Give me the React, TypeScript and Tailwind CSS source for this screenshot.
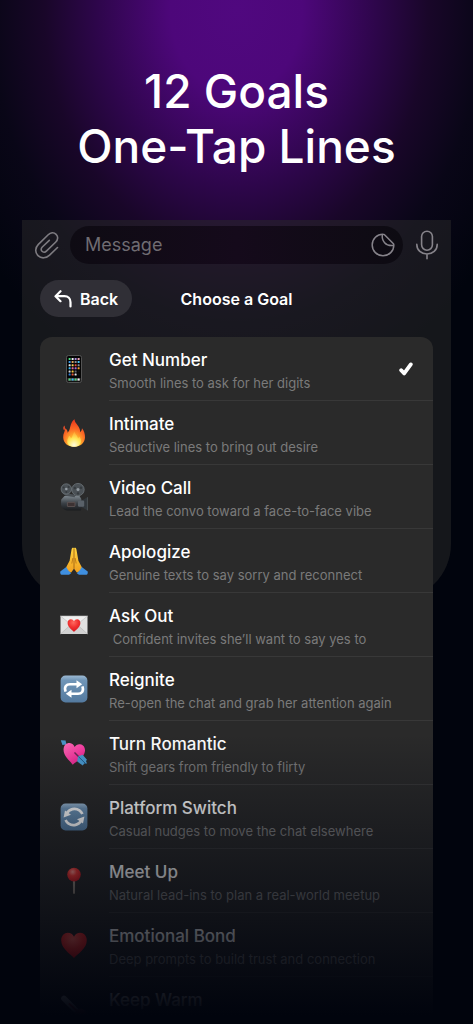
import type { ReactNode } from 'react'
import { useState } from 'react'

type Goal = {
  title: string
  text?: string
  icon: ReactNode
}

const Svg = ({ children }: { children: ReactNode }) => (
  <svg viewBox="0 0 28 28" className="w-7 h-7 shrink-0" aria-hidden="true">
    {children}
  </svg>
)

const appColors = [
  ['#4ade80', '#f3f4f6', '#a88be0', '#f0a6b8'],
  ['#3b9ded', '#d8a25a', '#8a8f98', '#45c4f5'],
  ['#e8ecf2', '#efd25c', '#e0503c', '#8c9098'],
  ['#38bdf8', '#e66a9a', '#9b6bd8', '#f59e2b'],
  ['#d1d5db', '#f5c542', '#5f6670', '#111111'],
  ['#2f7fe0', '#e25a3a', '#e8ecf2', '#111111'],
]

const Phone = () => (
  <Svg>
    <rect x="6.5" y="0.5" width="15" height="27" rx="2" fill="#050505" stroke="#5a5a5a" strokeWidth="0.9" />
    {appColors.map((row, y) =>
      row.map((color, x) => (
        <rect key={`${x}-${y}`} x={8.6 + x * 3} y={3 + y * 3.1} width="2" height="2" rx="0.5" fill={color} />
      )),
    )}
    <rect x="7.6" y="23" width="12.8" height="3.2" fill="#444" />
    <rect x="8.6" y="23.6" width="2" height="2" rx="0.5" fill="#4ade80" />
    <rect x="11.6" y="23.6" width="2" height="2" rx="0.5" fill="#38bdf8" />
    <rect x="14.6" y="23.6" width="2" height="2" rx="0.5" fill="#4ade80" />
    <rect x="17.6" y="23.6" width="2" height="2" rx="0.5" fill="#f3f4f6" />
  </Svg>
)

const Fire = () => (
  <Svg>
    <defs>
      <radialGradient id="flame" cx="0.5" cy="0.88" r="0.85">
        <stop offset="0" stopColor="#fff27a" />
        <stop offset="0.3" stopColor="#ffb52e" />
        <stop offset="0.62" stopColor="#fb6a25" />
        <stop offset="1" stopColor="#e8371c" />
      </radialGradient>
      <radialGradient id="flame-core" cx="0.5" cy="0.9" r="0.9">
        <stop offset="0" stopColor="#fffde0" />
        <stop offset="0.5" stopColor="#ffe85a" />
        <stop offset="1" stopColor="#ff9a2e" />
      </radialGradient>
    </defs>
    <path
      d="M14 27.8C7.5 27.8 3.5 23.8 3.2 18.5C3 14.5 5 12.5 5.3 9.2C7 10.5 7.7 12 7.6 13.8C10.5 10.5 9.8 7.5 11.4 4.2C12.2 2.5 13 1 14.6 0.2C14.3 4.5 20.5 7 20.2 13.2C21.4 12.2 21.9 10.8 22 9.3C24 12 25.2 15 25 18.5C24.7 24 20.5 27.8 14 27.8Z"
      fill="url(#flame)"
    />
    <path d="M4.3 11.5C2.8 10 3 7.8 4.6 6.6C4.5 8 5.7 9.7 4.3 11.5Z" fill="#f0502a" />
    <path
      d="M14 27.8C9.5 27.8 7 25.2 7.2 22C7.4 19.8 8.6 18.6 9 16.8C10.3 17.4 10.8 18.5 10.9 19.6C13 17.5 12.6 14.5 14.8 12.5C14.8 15.5 17.8 16.6 18 19.6C18.7 19 19 18.2 19.2 17.5C20.5 19 21.1 20.5 20.9 22.4C20.6 25.6 18.2 27.8 14 27.8Z"
      fill="url(#flame-core)"
    />
  </Svg>
)

const Camera = () => (
  <Svg>
    <defs>
      <linearGradient id="camera" x1="0" y1="0" x2="0" y2="1">
        <stop offset="0" stopColor="#7c858c" />
        <stop offset="0.5" stopColor="#3a4046" />
        <stop offset="1" stopColor="#191b1e" />
      </linearGradient>
    </defs>
    <path d="M20.5 18L27.5 14.2V27.4L20.5 23.5Z" fill="#30363b" />
    <path d="M27.4 14.2V27.4" stroke="#565d63" strokeWidth="0.7" />
    <path d="M1.2 16.5L4.5 13H19.5L21.3 16V26C21.3 27 20.8 27.6 19.8 27.6H7.5C3.8 27.4 1 24.6 1 21Z" fill="url(#camera)" />
    <rect x="18" y="17.5" width="6.2" height="6.3" rx="1.2" fill="#596169" />
    <rect x="7.4" y="19.3" width="7.6" height="4.2" rx="0.5" fill="#3c3233" stroke="#706362" strokeWidth="0.6" />
    <path d="M2 8L6 11.5L15 13" stroke="#4a5055" strokeWidth="2.4" fill="none" />
    <circle cx="6.3" cy="6" r="5.2" fill="#4b5156" stroke="#737b81" strokeWidth="0.7" />
    <circle cx="18" cy="6.6" r="6.2" fill="#4b5156" stroke="#737b81" strokeWidth="0.7" />
    <circle cx="6.3" cy="6" r="1.3" fill="#949ca2" />
    <circle cx="18" cy="6.6" r="1.5" fill="#949ca2" />
    <g fill="#363b3f">
      <circle cx="3.6" cy="4.6" r="1" />
      <circle cx="8.7" cy="4.1" r="1" />
      <circle cx="6.3" cy="9.1" r="1" />
      <circle cx="14.8" cy="5" r="1.2" />
      <circle cx="21" cy="4.8" r="1.2" />
      <circle cx="18" cy="10.4" r="1.2" />
    </g>
  </Svg>
)

const Pray = () => (
  <Svg>
    <defs>
      <linearGradient id="hand" x1="0" y1="0" x2="0" y2="1">
        <stop offset="0" stopColor="#ffd43f" />
        <stop offset="1" stopColor="#f0a020" />
      </linearGradient>
    </defs>
    <path d="M0.3 24.5L6.6 19.8L11.2 26.2L9 27.8H1.6C0.4 27.6 0 25.8 0.3 24.5Z" fill="#3f8fe0" />
    <path d="M27.7 24.5L21.4 19.8L16.8 26.2L19 27.8H26.4C27.6 27.6 28 25.8 27.7 24.5Z" fill="#3f8fe0" />
    <path d="M13.9 1C12.6 0.2 11.8 1 11.6 2.3L9.6 13.8L6.3 20C7.3 22.6 9.2 24.8 11.2 25.6L13.9 21.8Z" fill="url(#hand)" />
    <path d="M14.1 1C15.4 0.2 16.2 1 16.4 2.3L18.4 13.8L21.7 20C20.7 22.6 18.8 24.8 16.8 25.6L14.1 21.8Z" fill="url(#hand)" />
    <path d="M14 1.5V21.8M11.8 16.5L12.9 11M16.2 16.5L15.1 11" stroke="#b36d12" strokeWidth="0.8" fill="none" />
  </Svg>
)

const HeartShape = ({ fill }: { fill: string }) => (
  <path
    d="M14 27C10 22.5 1.2 17.5 1.2 9.2C1.2 4.8 4.2 1.8 7.8 1.8C10.6 1.8 12.9 3.3 14 5.8C15.1 3.3 17.4 1.8 20.2 1.8C23.8 1.8 26.8 4.8 26.8 9.2C26.8 17.5 18 22.5 14 27Z"
    fill={fill}
  />
)

const RedGradient = ({ id }: { id: string }) => (
  <defs>
    <radialGradient id={id} cx="0.45" cy="0.25" r="0.8">
      <stop offset="0" stopColor="#ff6a60" />
      <stop offset="0.5" stopColor="#f0302f" />
      <stop offset="1" stopColor="#cf1420" />
    </radialGradient>
  </defs>
)

const Letter = () => (
  <Svg>
    <RedGradient id="letter-heart" />
    <rect x="0.5" y="5" width="27" height="18" fill="#e2e2e2" />
    <path d="M0.5 23L11 13.5H17L27.5 23" fill="#d2d2d2" stroke="#b5b5b5" strokeWidth="0.6" />
    <path d="M0.5 5L14 16L27.5 5Z" fill="#efefef" stroke="#bcbcbc" strokeWidth="0.6" />
    <g transform="translate(7 7.4) scale(0.5)">
      <HeartShape fill="url(#letter-heart)" />
    </g>
  </Svg>
)

const Tile = ({ id }: { id: string }) => (
  <>
    <defs>
      <linearGradient id={id} x1="0" y1="0" x2="0" y2="1">
        <stop offset="0" stopColor="#9cb9d3" />
        <stop offset="0.18" stopColor="#7095b7" />
        <stop offset="1" stopColor="#547a9f" />
      </linearGradient>
    </defs>
    <rect x="0.6" y="0.6" width="26.8" height="26.8" rx="5" fill={`url(#${id})`} />
  </>
)

const Repeat = () => (
  <Svg>
    <Tile id="tile-repeat" />
    <path d="M5.6 16.6C3.8 11.8 6.5 9.2 10 9.2H17.5" stroke="#fff" strokeWidth="2.6" fill="none" />
    <path d="M16.5 5.2L22.2 9.2L16.5 13.2Z" fill="#fff" />
    <path d="M22.4 11.4C24.2 16.2 21.5 18.8 18 18.8H10.5" stroke="#fff" strokeWidth="2.6" fill="none" />
    <path d="M11.5 14.8L5.8 18.8L11.5 22.8Z" fill="#fff" />
  </Svg>
)

const Refresh = () => (
  <Svg>
    <Tile id="tile-refresh" />
    <path d="M6.8 10.4C9.3 6 15 4.4 19.4 7.4C20.8 8.4 21.8 9.6 22.4 11" stroke="#fff" strokeWidth="2.7" fill="none" />
    <path d="M3.6 14.6L5 7.4L11 11.8Z" fill="#fff" />
    <path d="M21.2 17.6C18.7 22 13 23.6 8.6 20.6C7.2 19.6 6.2 18.4 5.6 17" stroke="#fff" strokeWidth="2.7" fill="none" />
    <path d="M24.4 13.4L23 20.6L17 16.2Z" fill="#fff" />
  </Svg>
)

const Cupid = () => (
  <Svg>
    <defs>
      <linearGradient id="pink" x1="0" y1="0" x2="1" y2="1">
        <stop offset="0" stopColor="#ff6fb8" />
        <stop offset="0.55" stopColor="#fb3da4" />
        <stop offset="1" stopColor="#d81d84" />
      </linearGradient>
    </defs>
    <path d="M3 3L9 8" stroke="#3d7fae" strokeWidth="1.4" />
    <path d="M0.8 1.2L5.6 1.6L6.4 5.4L2.4 5.9Z" fill="#4b96c8" />
    <g transform="translate(2.2 3) rotate(6 11 11) scale(0.84)">
      <HeartShape fill="url(#pink)" />
    </g>
    <path d="M14.5 13.5L22 21" stroke="#6f2858" strokeWidth="1.5" />
    <path d="M18 17.4L22.6 15.8L27 20.8L26 22L27 24.4L24.2 24.6L22.8 26.4L17.2 22.6Z" fill="#4a9cd2" />
    <path d="M18.6 17.8L26 25" stroke="#245c86" strokeWidth="1" />
  </Svg>
)

const Pin = () => (
  <Svg>
    <defs>
      <radialGradient id="pin" cx="0.4" cy="0.3" r="0.75">
        <stop offset="0" stopColor="#ff9a92" />
        <stop offset="0.4" stopColor="#ee3a36" />
        <stop offset="1" stopColor="#c01a22" />
      </radialGradient>
    </defs>
    <path d="M13.3 12H14.7L14.5 26.4H13.5Z" fill="#cdbfae" stroke="#8e8276" strokeWidth="0.5" />
    <circle cx="14" cy="7.6" r="6.8" fill="url(#pin)" />
  </Svg>
)

const Heart = () => (
  <Svg>
    <RedGradient id="heart" />
    <HeartShape fill="url(#heart)" />
  </Svg>
)

const Thermometer = () => (
  <Svg>
    <path d="M4 3.5L18 17.5" stroke="#d8dce2" strokeWidth="5.6" strokeLinecap="round" />
    <path d="M9 8.5L20 19" stroke="#d7404a" strokeWidth="1.8" />
    <circle cx="20.5" cy="19.5" r="6" fill="#b5525e" />
    <circle cx="20.5" cy="19.5" r="4" fill="#d7404a" />
  </Svg>
)

const goals: Goal[] = [
  { title: 'Get Number', text: 'Smooth lines to ask for her digits', icon: <Phone /> },
  { title: 'Intimate', text: 'Seductive lines to bring out desire', icon: <Fire /> },
  { title: 'Video Call', text: 'Lead the convo toward a face-to-face vibe', icon: <Camera /> },
  { title: 'Apologize', text: 'Genuine texts to say sorry and reconnect', icon: <Pray /> },
  { title: 'Ask Out', text: ' Confident invites she’ll want to say yes to', icon: <Letter /> },
  { title: 'Reignite', text: 'Re-open the chat and grab her attention again', icon: <Repeat /> },
  { title: 'Turn Romantic', text: 'Shift gears from friendly to flirty', icon: <Cupid /> },
  { title: 'Platform Switch', text: 'Casual nudges to move the chat elsewhere', icon: <Refresh /> },
  { title: 'Meet Up', text: 'Natural lead-ins to plan a real-world meetup', icon: <Pin /> },
  { title: 'Emotional Bond', text: 'Deep prompts to build trust and connection', icon: <Heart /> },
  { title: 'Keep Warm', icon: <Thermometer /> },
]

const MessageBar = () => (
  <div className="flex items-center pt-1.5 px-3">
    <button aria-label="Attach" className="text-[#7d7b80]">
      <svg viewBox="0 0 26 28" className="w-[26px] h-7" fill="none" stroke="currentColor" strokeWidth="1.6" strokeLinecap="round">
        <path d="M23.5 16.5L15.6 24.1C12.2 27.4 7.3 27.9 4 24.6C0.7 21.3 1.2 16.6 4.4 13.4L14.2 3.8C16.5 1.5 19.8 1.1 22.1 3.3C24.4 5.5 24 8.8 21.8 11L12.4 20.1C11.1 21.4 9.3 21.6 8 20.3C6.8 19.1 7 17.3 8.3 16L15.3 9.3" />
      </svg>
    </button>
    <div className="flex flex-1 min-w-0 items-center h-[38px] ml-2.5 pl-[15px] pr-2 rounded-full bg-linear-to-r from-[#0e0b13] via-[#150a1b] to-[#0d0b12]">
      <input
        aria-label="Message"
        placeholder="Message"
        className="flex-1 min-w-0 bg-transparent outline-none text-lg text-white placeholder:text-[#6f6c72]"
      />
      <button aria-label="Stickers" className="text-[#86838a]">
        <svg viewBox="0 0 24 24" className="w-6 h-6" fill="none" stroke="currentColor" strokeWidth="1.5" strokeLinejoin="round">
          <path d="M12.2 1.2C6 1 1.2 6 1.2 12C1.2 18 6 22.8 12 22.8C18 22.8 23 18 22.8 11.8C22.8 11.3 22.6 10.9 22.2 10.5L13.5 1.8C13.1 1.4 12.7 1.2 12.2 1.2Z" />
          <path d="M11.4 1.4C10.4 7.5 14.5 13.8 22.7 12.4" />
        </svg>
      </button>
    </div>
    <button aria-label="Record" className="ml-3 text-[#86838a]">
      <svg viewBox="0 0 24 30" className="w-6 h-[30px]" fill="none" stroke="currentColor" strokeWidth="1.6" strokeLinecap="round">
        <rect x="6.6" y="1.2" width="10.8" height="19" rx="5.4" />
        <path d="M1.8 14.4C1.8 20.2 6.4 24 12 24C17.6 24 22.2 20.2 22.2 14.4M12 24V28.8" />
      </svg>
    </button>
  </div>
)

export default function App() {
  const [selected, setSelected] = useState('Get Number')

  return (
    <main className="relative h-screen overflow-hidden bg-[#01040d] bg-[radial-gradient(ellipse_300px_380px_at_50%_10px,#50087f_0%,#4d077a_22%,#2d064a_47%,#190629_64%,#090617_82%,#01040d_105%)] font-['Inter','Liberation_Sans',sans-serif] text-white">
      <h1 className="pt-16 text-center text-[46px] leading-[55px] font-medium">
        12 Goals
        <br />
        One-Tap Lines
      </h1>

      <section className="relative mx-[22px] mt-[46px]">
        <div className="absolute inset-x-0 top-0 h-[380px] rounded-b-[56px] bg-[#2a2a2a]/50" />

        <div className="relative">
          <MessageBar />

          <div className="relative flex items-center h-[37px] mt-4 mx-[18px]">
            <button className="flex items-center gap-2 h-full pl-3.5 pr-3.5 rounded-full bg-[#302f36] text-base font-semibold">
              <svg viewBox="0 0 18 18" className="w-[18px] h-[18px]" fill="none" stroke="currentColor" strokeWidth="2.2" strokeLinecap="round" strokeLinejoin="round">
                <path d="M6.5 1.2L1.5 6.2L6.5 11.2M1.8 6.2H10.5C14 6.2 16.5 8.7 16.5 12.2V16.4" />
              </svg>
              Back
            </button>
            <h2 className="absolute inset-x-0 text-center text-base font-semibold pointer-events-none">Choose a Goal</h2>
          </div>

          <ul className="mt-5 mx-[18px] rounded-t-xl bg-[#2a2a2a]">
            {goals.map((goal) => (
              <li key={goal.title}>
                <button className="flex w-full h-16 items-center pl-5 text-left" onClick={() => setSelected(goal.title)}>
                  {goal.icon}
                  <span className="flex flex-1 min-w-0 h-full items-center ml-[21px] border-b border-[#383838]">
                    <span className="flex flex-1 min-w-0 h-full flex-col pt-2.5">
                      <span className="text-[17px] leading-[26px] font-medium">{goal.title}</span>
                      {goal.text && (
                        <span className="text-[13px] leading-5 text-[#7a7a7a] whitespace-pre">{goal.text}</span>
                      )}
                    </span>
                    {selected === goal.title && (
                      <svg viewBox="0 0 14 14" className="w-3.5 h-3.5 mr-5" fill="none" stroke="#fff" strokeWidth="3.8" strokeLinecap="round" strokeLinejoin="round">
                        <path d="M2.2 8.2L5.2 11.4L11.8 2.4" />
                      </svg>
                    )}
                  </span>
                </button>
              </li>
            ))}
          </ul>
        </div>
      </section>

      <div className="absolute inset-x-0 bottom-0 h-[290px] bg-linear-to-b from-[#01040d]/0 to-[#01040d] to-97% pointer-events-none" />
    </main>
  )
}
